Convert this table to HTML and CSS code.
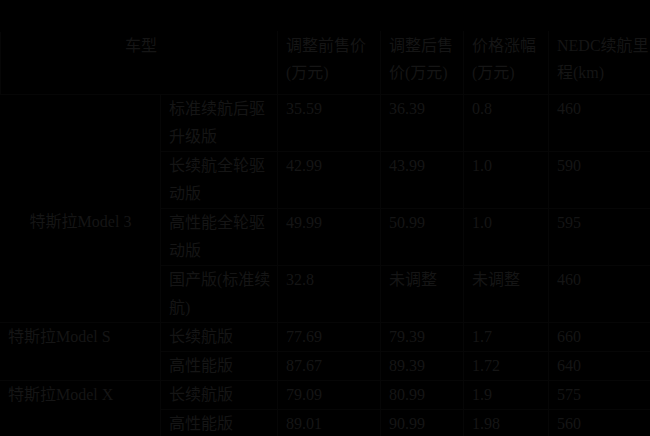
FILE: index.html
```html
<!DOCTYPE html>
<html lang="zh-CN">
<head>
<meta charset="utf-8">
<title>特斯拉价格调整</title>
<link rel="stylesheet" href="styles.css">
</head>
<body>
<table class="price-table">
  <colgroup>
    <col class="c-model">
    <col class="c-trim">
    <col class="c-before">
    <col class="c-after">
    <col class="c-diff">
    <col class="c-range">
  </colgroup>
  <thead>
    <tr>
      <th colspan="2" class="th-model">车型</th>
      <th>调整前售价(万元)</th>
      <th>调整后售价(万元)</th>
      <th>价格涨幅(万元)</th>
      <th class="th-range">NEDC续航里程(km)</th>
    </tr>
  </thead>
  <tbody>
    <tr>
      <td rowspan="4" class="model model-center">特斯拉Model 3</td>
      <td>标准续航后驱升级版</td>
      <td>35.59</td>
      <td>36.39</td>
      <td>0.8</td>
      <td>460</td>
    </tr>
    <tr>
      <td>长续航全轮驱动版</td>
      <td>42.99</td>
      <td>43.99</td>
      <td>1.0</td>
      <td>590</td>
    </tr>
    <tr>
      <td>高性能全轮驱动版</td>
      <td>49.99</td>
      <td>50.99</td>
      <td>1.0</td>
      <td>595</td>
    </tr>
    <tr>
      <td>国产版(标准续航)</td>
      <td>32.8</td>
      <td>未调整</td>
      <td>未调整</td>
      <td>460</td>
    </tr>
    <tr>
      <td rowspan="2" class="model">特斯拉Model S</td>
      <td>长续航版</td>
      <td>77.69</td>
      <td>79.39</td>
      <td>1.7</td>
      <td>660</td>
    </tr>
    <tr>
      <td>高性能版</td>
      <td>87.67</td>
      <td>89.39</td>
      <td>1.72</td>
      <td>640</td>
    </tr>
    <tr>
      <td rowspan="2" class="model">特斯拉Model X</td>
      <td>长续航版</td>
      <td>79.09</td>
      <td>80.99</td>
      <td>1.9</td>
      <td>575</td>
    </tr>
    <tr>
      <td>高性能版</td>
      <td>89.01</td>
      <td>90.99</td>
      <td>1.98</td>
      <td>560</td>
    </tr>
  </tbody>
</table>
</body>
</html>
```

FILE: styles.css
```css
html, body {
  margin: 0;
  padding: 0;
  background: #000;
}

body {
  font-family: "Liberation Serif", "Noto Sans CJK SC", serif;
  color: #151515;
  overflow: hidden;
}

.price-table {
  margin-top: 31px;
  width: 650px;
  table-layout: fixed;
  border-collapse: collapse;
}

.c-model { width: 160px; }
.c-trim { width: 117px; }
.c-before { width: 103px; }
.c-after { width: 83px; }
.c-diff { width: 85px; }
.c-range { width: 102px; }

.price-table th,
.price-table td {
  border: 1px solid #060606;
  padding: 0 4px 0 8px;
  text-align: left;
  vertical-align: top;
  font-weight: normal;
}

.price-table th {
  font-size: 16px;
  line-height: 27px;
  padding-bottom: 8px;
  border-top-color: #000;
}

.price-table .th-model {
  text-align: center;
}

.price-table .th-range {
  padding-right: 0;
  border-right-color: #000;
}

.price-table td {
  font-size: 16px;
  line-height: 28px;
}

.price-table td:last-child {
  border-right-color: #000;
}

.price-table td.model {
  padding-left: 7px;
  border-left-color: #000;
}

.price-table td.model-center {
  text-align: center;
  vertical-align: middle;
  padding: 27px 0 0;
}
```
